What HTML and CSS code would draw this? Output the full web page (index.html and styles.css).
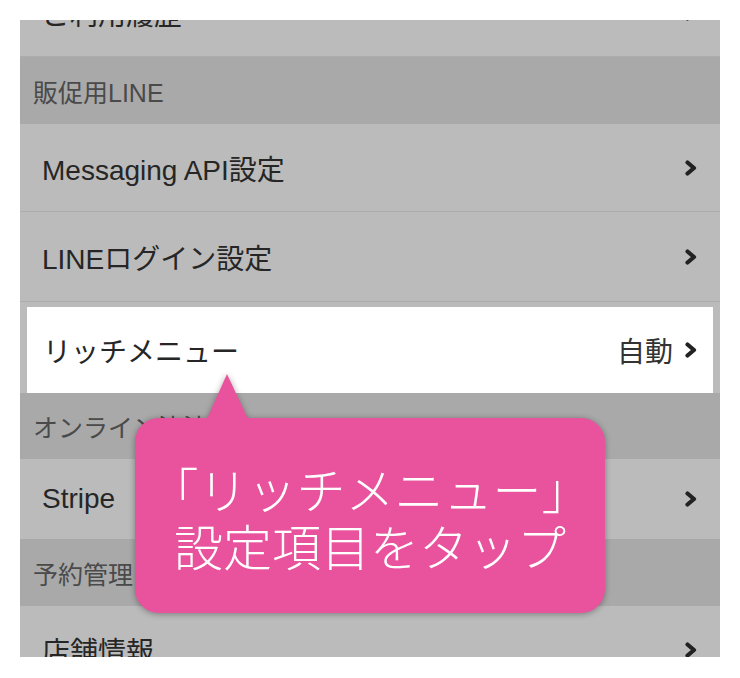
FILE: index.html
```html
<!DOCTYPE html>
<html lang="ja">
<head>
<meta charset="utf-8">
<title>リッチメニュー設定</title>
<link rel="stylesheet" href="styles.css">
</head>
<body>
<div class="panel">
  <div class="row row--first">
    <span class="label">ご利用履歴</span>
    <svg class="chev" viewBox="0 0 12 16" width="12" height="16"><polyline points="2.5,2.5 9,8 2.5,13.5"/></svg>
  </div>
  <div class="section">販促用LINE</div>
  <div class="row">
    <span class="label">Messaging API設定</span>
    <svg class="chev" viewBox="0 0 12 16" width="12" height="16"><polyline points="2.5,2.5 9,8 2.5,13.5"/></svg>
  </div>
  <div class="row row--tall">
    <span class="label">LINEログイン設定</span>
    <svg class="chev" viewBox="0 0 12 16" width="12" height="16"><polyline points="2.5,2.5 9,8 2.5,13.5"/></svg>
  </div>
  <div class="highlight">
    <div class="highlight__inner">
      <span class="label">リッチメニュー</span>
      <span class="value">自動</span>
      <svg class="chev" viewBox="0 0 12 16" width="12" height="16"><polyline points="2.5,2.5 9,8 2.5,13.5"/></svg>
    </div>
  </div>
  <div class="section section--short">オンライン決済</div>
  <div class="row row--short">
    <span class="label">Stripe</span>
    <svg class="chev" viewBox="0 0 12 16" width="12" height="16"><polyline points="2.5,2.5 9,8 2.5,13.5"/></svg>
  </div>
  <div class="section">予約管理</div>
  <div class="row">
    <span class="label">店舗情報</span>
    <svg class="chev" viewBox="0 0 12 16" width="12" height="16"><polyline points="2.5,2.5 9,8 2.5,13.5"/></svg>
  </div>

  <div class="bubble">
    <p class="bubble__text">「リッチメニュー」<br>設定項目をタップ</p>
  </div>
</div>
</body>
</html>
```
FILE: styles.css
```css
html, body {
  margin: 0;
  padding: 0;
  background: #ffffff;
}

body {
  font-family: "Liberation Sans", "Noto Sans CJK JP", sans-serif;
}

.panel {
  position: relative;
  margin: 20px 20px 0;
  width: 700px;
  height: 637px;
  overflow: hidden;
  background: #bbbbbb;
}

.row {
  display: flex;
  align-items: center;
  box-sizing: border-box;
  height: 88px;
  padding: 0 23px 0 22px;
  background: #bbbbbb;
  border-bottom: 1px solid #acacac;
  color: #262626;
  font-size: 28px;
}

.row--first {
  margin-top: -51px;
}

.row--tall {
  height: 90px;
}

.row--short {
  height: 80px;
  border-bottom: none;
}

.label {
  flex: 1;
  white-space: nowrap;
}

.value {
  color: #333333;
  margin-right: 12px;
}

.chev {
  flex: none;
  fill: none;
  stroke: #222222;
  stroke-width: 4.2;
  stroke-linecap: round;
  stroke-linejoin: round;
}

.section {
  display: flex;
  align-items: center;
  box-sizing: border-box;
  height: 67px;
  padding-left: 13px;
  background: #a9a9a9;
  color: #4a4a4a;
  font-size: 25px;
}

.section--short {
  height: 66px;
}

.highlight {
  box-sizing: border-box;
  height: 91px;
  padding: 5px 7px 0;
  background: #bbbbbb;
}

.highlight__inner {
  display: flex;
  align-items: center;
  box-sizing: border-box;
  height: 86px;
  padding: 0 16px 0 16px;
  background: #ffffff;
  color: #262626;
  font-size: 28px;
}

.bubble {
  position: absolute;
  left: 115px;
  top: 398px;
  width: 470px;
  height: 195px;
  box-sizing: border-box;
  display: flex;
  align-items: center;
  justify-content: center;
  background: #e9529c;
  border-radius: 24px;
  filter: drop-shadow(0 1px 3px rgba(0, 0, 0, 0.35));
}

.bubble::before {
  content: "";
  position: absolute;
  left: 72px;
  top: -44px;
  width: 0;
  height: 0;
  border-left: 20px solid transparent;
  border-right: 21px solid transparent;
  border-bottom: 45px solid #e9529c;
}

.bubble__text {
  margin: 0;
  color: #ffffff;
  font-family: "Noto Sans CJK JP", sans-serif;
  font-size: 49px;
  font-weight: 300;
  line-height: 57px;
  text-align: center;
  white-space: nowrap;
}
```
